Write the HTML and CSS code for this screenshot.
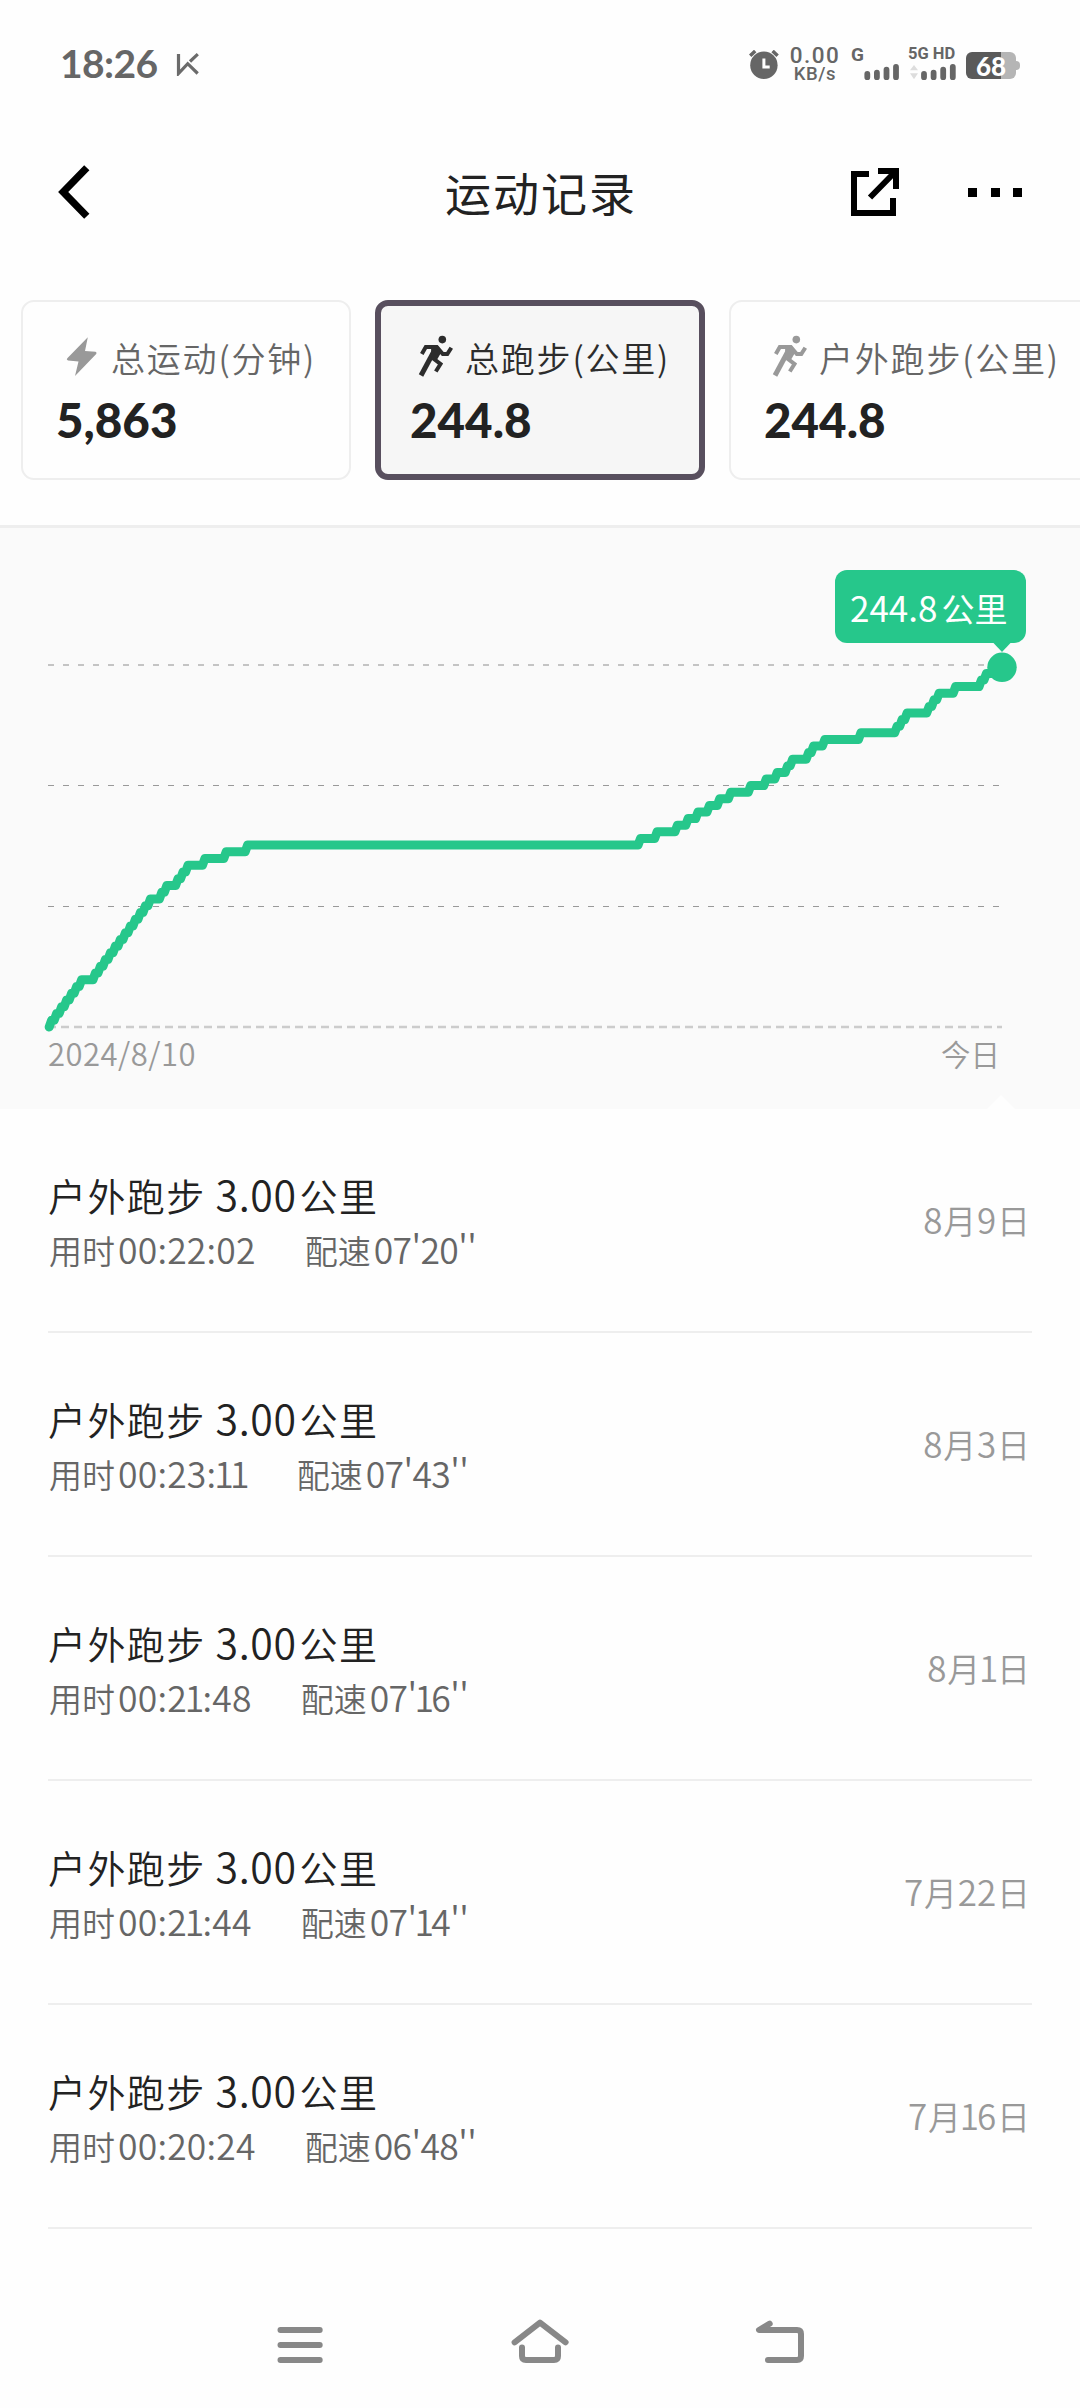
FILE: index.html
```
<!DOCTYPE html>
<html lang="zh-CN">
<head>
<meta charset="utf-8">
<title>运动记录</title>
<link rel="stylesheet" href="styles.css">
</head>
<body>
<svg class="defs" width="0" height="0">
  <symbol id="runner" viewBox="0 0 60 60">
    <circle cx="42.300" cy="14.600" r="3.800"/>
    <path d="M21.800 29l4-7h11l6 7h4.500l4-6.300M35 31l-1 3 6.500 5-4.700 7.500" fill="none" stroke="currentColor" stroke-width="4"/>
    <path d="M35.500 23.500L21 50.500" fill="none" stroke="currentColor" stroke-width="5"/>
    <path d="M31 21h7l3.500 6-5 8.500-5-1z"/>
  </symbol>
</svg>
<div class="phone">
  <header class="status">
    <span class="clock">18:26</span>
    <svg class="status-k" width="24" height="24" viewBox="176 52 24 24"><path d="M178.500 54v19.500l9.200-9.800 10 9.800M190 61.500l7.800-7.300"/></svg>
    <svg class="alarm" width="30" height="30" viewBox="750 50 30 30"><circle cx="764.900" cy="65.300" r="13.700"/><path class="hand" d="M764.900 58.500V67h5.800"/><path class="ear" d="M751.200 55.700l5-4.700M773.600 51l5 4.700"/></svg>
    <div class="speed"><b>0.00</b><span>KB/s</span></div>
    <div class="sig"><span class="net one-g">G</span>
      <svg width="36" height="18" viewBox="863 63 36 18"><path d="M867.300 74v3.200M876.900 72.700v4.500M886.500 69.700v7.500M896 67v10.200"/></svg></div>
    <div class="sig second"><span class="net">5G HD</span>
      <svg width="49" height="18" viewBox="908 63 49 18"><path class="tri" d="M914 65l4 5.300h-8zM914 79.300l4-6h-8z"/><path d="M924 74v3.200M933.600 72.700v4.500M943.200 69.700v7.500M952.800 67v10.200"/></svg></div>
    <div class="battery"><span>68</span></div>
  </header>

  <nav class="bar">
    <svg class="back" width="34" height="56" viewBox="56 164 34 56"><path d="M86.800 167.700L63.200 192l23.600 24.300"/></svg>
    <h1>运动记录</h1>
    <svg class="share" width="50" height="56" viewBox="851 164 50 56"><path d="M870 174h-15v39h39v-15M879 171h18v18M871 197.500L896 172"/></svg>
    <div class="dots"><i></i><i></i><i></i></div>
  </nav>

  <section class="cards">
    <article class="card">
      <div class="label"><svg class="icon" viewBox="0 0 60 60"><path d="M41.800 12.300L39 26l10.500.800q1.800.700.700 2.300L29 51l3.500-14.500-10.500-1q-2-.700-.700-2.300z"/></svg><span>总运动(分钟)</span></div>
      <strong>5,863</strong>
    </article>
    <article class="card active">
      <div class="label"><svg class="icon"><use href="#runner"/></svg><span>总跑步(公里)</span></div>
      <strong>244.8</strong>
    </article>
    <article class="card wide">
      <div class="label"><svg class="icon"><use href="#runner"/></svg><span>户外跑步(公里)</span></div>
      <strong>244.8</strong>
    </article>
  </section>

  <section class="chart">
    <svg class="plot" width="1080" height="508" viewBox="0 528 1080 508">
      <g class="grid">
        <path class="top" d="M48 665H1001"/>
        <path d="M48 785.500H1001M48 906.500H1001"/>
        <path class="base" d="M48 1027H1002"/>
      </g>
      <path class="line" d="M49.200 1027l2.400-6.740h2.600l2.400-6.740h2.600l2.400-6.740h2.600l2.400-6.740h2.600l2.400-6.740h2.600l2.400-6.740h2.600l2.400-6.740H93l2.400-6.740h2.600l2.400-6.740h2.600l2.400-6.740h2.600l2.400-6.740h2.600l2.400-6.740h2.600l2.400-6.740h2.600l2.400-6.740h2.600l2.400-6.740h2.600l2.400-6.740h2.600l2.400-6.740h2.600l2.400-6.740h2.600l2.400-6.740H159.400l2.400-6.740h2.600l2.400-6.740H175.600l2.400-6.740h2.600l2.400-6.740h2.600l2.400-6.740H202.500l2.400-6.740H223.800l2.400-6.740H245.200l2.400-6.740H638.100l2.400-6.600H654.700l2.400-6.600H675l2.400-6.600H685.700l2.400-6.600H695.600l2.400-6.600H707l2.400-6.600H717.300l2.400-6.600H728.400l2.400-6.600H748.300l2.400-6.600H763.800l2.400-6.600H774.800l2.400-6.600H785.200l2.400-6.600h2.600l2.400-6.600H806.200l2.400-6.600h2.600l2.400-6.600H822.400l2.400-6.600H858.500l2.400-6.600H894.700l2.400-6.600h2.600l2.400-6.600h2.600l2.400-6.600H926.700l2.400-6.600h2.600l2.400-6.600h2.600l2.400-6.600H953.200l2.400-6.600H979l2.400-6.600h2.600l2.400-6.600H992l2.400-6.600H1002"/>
      <path class="mark" d="M993.500 643h17l-8.500 9z"/><circle class="mark" cx="1002" cy="667.300" r="14.700"/>
    </svg>
    <div class="tip"><span>244.8</span>公里</div>
    <div class="axis"><span class="from">2024/8/10</span><span class="today">今日</span></div>
    <div class="notch"></div>
  </section>

  <main>
    <article class="run"><div><h2>户外跑步<b>3.00</b>公里</h2><p>用时<b>00:22:02</b><span>配速<b>07'20''</b></span></p></div><time><b>8</b>月<b>9</b>日</time></article>
    <article class="run"><div><h2>户外跑步<b>3.00</b>公里</h2><p>用时<b>00:23:<i>1</i><i>1</i></b><span>配速<b>07'43''</b></span></p></div><time><b>8</b>月<b>3</b>日</time></article>
    <article class="run"><div><h2>户外跑步<b>3.00</b>公里</h2><p>用时<b>00:2<i>1</i>:48</b><span>配速<b>07'<i>1</i>6''</b></span></p></div><time><b>8</b>月<b><i>1</i></b>日</time></article>
    <article class="run"><div><h2>户外跑步<b>3.00</b>公里</h2><p>用时<b>00:2<i>1</i>:44</b><span>配速<b>07'<i>1</i>4''</b></span></p></div><time><b>7</b>月<b>22</b>日</time></article>
    <article class="run"><div><h2>户外跑步<b>3.00</b>公里</h2><p>用时<b>00:20:24</b><span>配速<b>06'48''</b></span></p></div><time><b>7</b>月<b><i>1</i>6</b>日</time></article>
  </main>

  <footer>
    <svg width="60" height="60" viewBox="270 2315 60 60"><path d="M280.500 2330h39.200M280.500 2345h39.200M280.500 2360h39.200"/></svg>
    <svg width="60" height="60" viewBox="510 2315 60 60"><path d="M514.600 2342.300L540 2322.700l25.600 19.600M522 2347.500v8.500q0 4 4 4h28q4 0 4-4v-8.500"/></svg>
    <svg width="60" height="60" viewBox="750 2315 60 60"><path d="M769.700 2323.700L759 2330h38q4 0 4 4v22q0 4-4 4h-29"/></svg>
  </footer>
</div>
</body>
</html>
```
FILE: styles.css
```
* { box-sizing: border-box; }
body { margin: 0; background: #fefefe; font-family: "Noto Sans CJK SC", sans-serif; color: #222; }
h1, h2, p { margin: 0; font-weight: 400; }
i { font-style: normal; }
svg { display: block; flex: none; }
.defs { position: absolute; }
.phone { width: 1080px; height: 2408px; overflow: hidden; display: flex; flex-direction: column; white-space: nowrap; }

.status { height: 128px; display: flex; align-items: flex-start; padding-left: 60px; color: #666; }
.clock { font: 700 39px/40px Lato, sans-serif; letter-spacing: -.6px; width: 116px; margin-top: 43px; }
.status-k { margin-top: 52px; fill: none; stroke: #6b6b6b; stroke-width: 3.200; }
.alarm { margin: 50px 0 0 549px; fill: #666; }
.alarm .hand { fill: none; stroke: #fff; stroke-width: 3; }
.alarm .ear { stroke: #666; stroke-width: 3.500; }
.speed { width: 52px; margin: 44px 0 0 10px; display: flex; flex-direction: column; align-items: center; font-family: Roboto, sans-serif; }
.speed b { font-size: 22.500px; line-height: 22px; font-weight: 500; letter-spacing: 1.500px; }
.speed span { font-size: 18.500px; line-height: 16px; font-weight: 500; letter-spacing: .6px; }
.sig { margin-top: 46px; padding-left: 12px; width: 67px; }
.sig svg { stroke: #666; stroke-width: 5.800; stroke-linecap: round; }
.net { display: block; height: 17px; font: 700 16.500px/15px Roboto, sans-serif; }
.one-g { font-size: 19px; line-height: 18px; margin-left: -2px; }
.sig:not(.second) svg { margin-left: 10px; }
.second { padding: 0; width: 58px; }
.tri { fill: #ddd; stroke: none; }
.battery { position: relative; width: 50px; height: 27px; margin-top: 52px; border-radius: 6px; background: linear-gradient(90deg, #5a5a5a 35px, #b5b5b5 35px); display: flex; justify-content: center; }
.battery span { font: 900 26px/28px Lato, sans-serif; color: #fff; }
.battery::after { content: ""; position: absolute; left: 50px; top: 9px; width: 4px; height: 9px; border-radius: 0 4px 4px 0; background: #b5b5b5; }

.bar { height: 128px; display: flex; align-items: center; padding-left: 56px; }
.bar svg { fill: none; stroke: #000; }
.back { stroke-width: 7.300; }
.share { stroke-width: 6; }
h1 { flex: none; width: 200px; margin: 0 0 3px 355px; font-size: 46px; letter-spacing: 2px; line-height: 60px; }
.share { margin-left: 205px; }
.dots { display: flex; gap: 13.500px; margin-left: 68px; }
.dots i { width: 9px; height: 9px; background: #000; }

.cards { height: 269px; padding: 44px 0 0 21px; display: flex; gap: 24px; }
.card { flex: none; width: 330px; height: 180px; border: 2px solid #eee; border-radius: 13px; padding: 27px 0 0 33px; }
.card.active { border: 6px solid #584f5e; background: #f6f6f6; padding: 23px 0 0 29px; }
.card.wide { width: 366px; }
.label { display: flex; align-items: center; height: 60px; margin-left: -10px; font-size: 34px; font-weight: 350; letter-spacing: 1.800px; color: #666; }
.icon { width: 60px; height: 60px; margin-top: -8px; fill: currentColor; color: #999; }
.label span { margin: -4px 0 0 5px; }
.active .label, .active .icon { color: #2c2c2c; }
.card strong { display: block; font: 900 47.500px/60px Lato, sans-serif; margin-top: 1px; }

.chart { position: relative; height: 584px; border-top: 3px solid #eee; background: #fafafa; flex: none; }
.grid { fill: none; stroke: #999; stroke-width: 1.200; stroke-dasharray: 6 9; }
.grid .top { stroke: #c4c4c4; stroke-width: 2; }
.grid .base { stroke: #ccc; stroke-width: 2.600; stroke-dasharray: 8 5; }
.line { fill: none; stroke: #26c78b; stroke-width: 9; stroke-linecap: round; stroke-linejoin: round; }
.mark { fill: #26c78b; }
.tip { position: absolute; left: 835px; top: 42px; width: 191px; height: 73px; border-radius: 12px; background: #26c78b; color: #fff; font-size: 33px; line-height: 73px; padding-left: 15px; }
.tip span { font-size: 35px; margin-right: 4px; }
.axis { display: flex; justify-content: space-between; padding: 0 80px 0 48px; font-size: 31px; line-height: 34px; color: #999; font-weight: 350; }
.from { letter-spacing: .5px; }
.today { font-size: 29.500px; }
.notch { position: absolute; left: 987px; bottom: 0; width: 28px; height: 14px; background: #fefefe; clip-path: polygon(50% 0, 100% 100%, 0 100%); }

main { padding: 0 48px; }
.run { height: 224px; border-bottom: 2px solid #eee; display: flex; align-items: center; justify-content: space-between; }
.run h2 { font-size: 38px; font-weight: 350; letter-spacing: 1.400px; line-height: 54px; margin-top: 2px; }
.run h2 b { font-size: 41px; font-weight: 350; margin: 0 3px 0 10px; letter-spacing: .6px; }
.run p { font-size: 33px; line-height: 54px; color: #666; font-weight: 350; padding-left: 1px; }
.run p b { font-size: 35.500px; font-weight: 350; margin-left: 3px; letter-spacing: .2px; }
.run p span { margin-left: 49px; }
.run p span b { letter-spacing: -.6px; }
.run i { margin: 0 -2px; }
.run time { font-size: 33px; color: #999; font-weight: 350; padding: 0 2px 3px 0; }
.run time b { font-size: 35px; font-weight: 350; margin: 0 .8px; }

footer { display: flex; justify-content: center; gap: 180px; padding-top: 86px; }
footer svg { fill: none; stroke: #888; stroke-width: 6; stroke-linecap: round; stroke-linejoin: round; }
```
